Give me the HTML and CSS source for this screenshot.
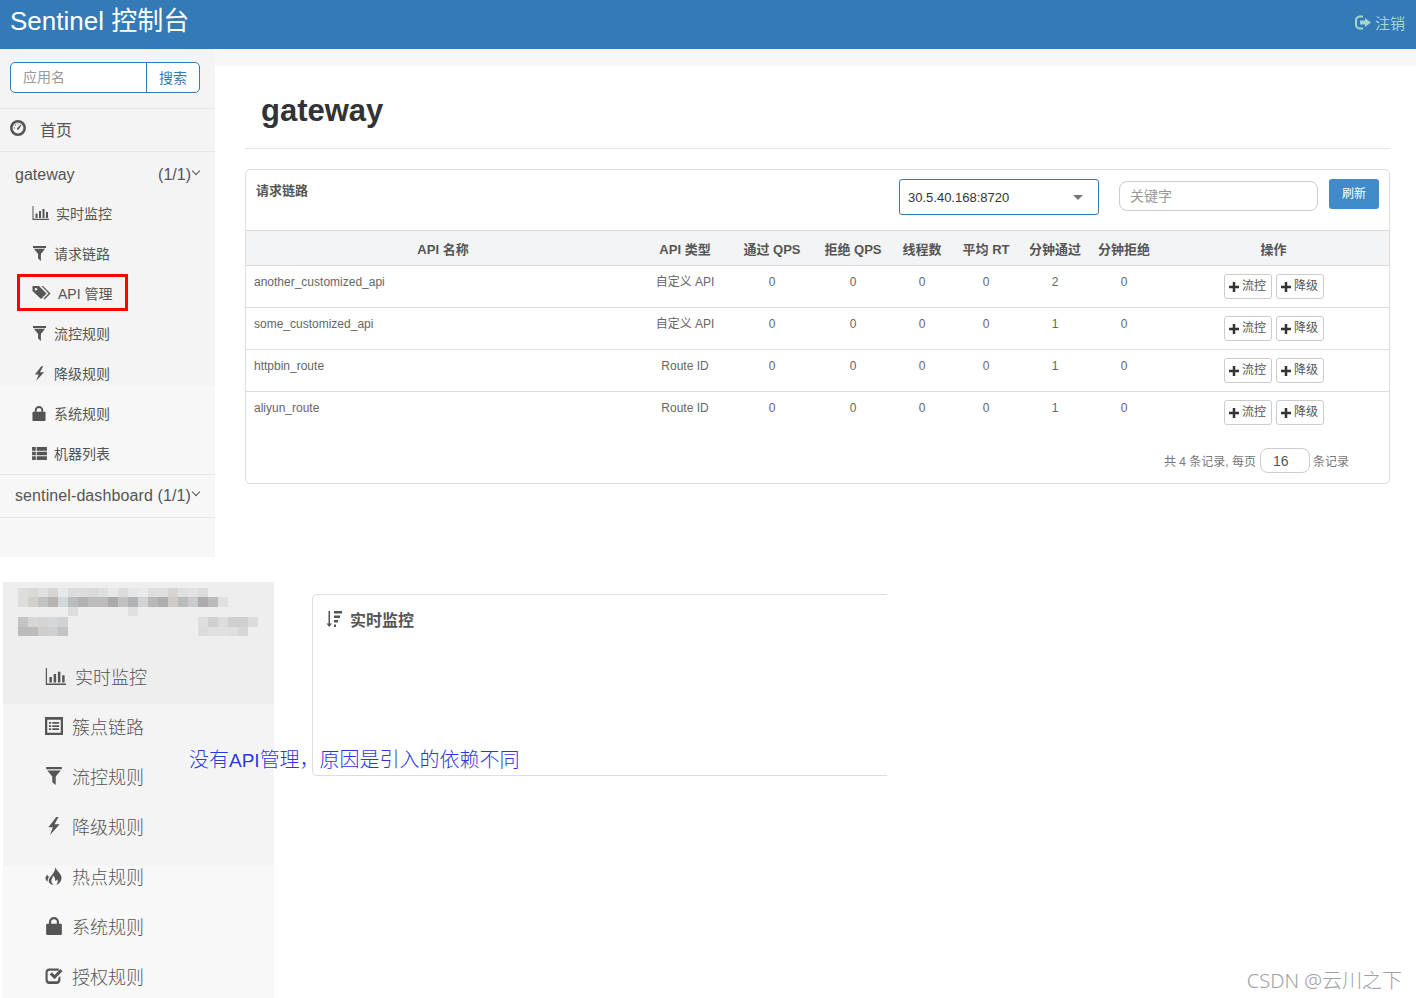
FILE: index.html
```html
<!DOCTYPE html>
<html lang="zh-CN">
<head>
  <meta charset="UTF-8" />
  <title>Sentinel 控制台</title>
  <link rel="stylesheet" href="styles.css">
</head>
<body>
  <svg class="icon-defs" xmlns="http://www.w3.org/2000/svg">
    <symbol id="i-dashboard" viewBox="0 0 16 16"><path fill-rule="evenodd" d="M8 0a8 8 0 110 16A8 8 0 018 0zm0 2.600a5.400 5.400 0 100 10.800A5.400 5.400 0 008 2.600z"/><path d="M7 8.200L10.800 4.500l.7.7L8.600 9.500a1.100 1.100 0 01-1.600-1.300zM3.800 7.500h1.300v1H3.800zM5 4.800h1v1H5zM7.600 3.600h1v1h-1z"/></symbol>
    <symbol id="i-stats" viewBox="0 0 16 14"><path d="M0 0h1v12.800h16V14H0zM3 7.500h2v4.500H3zM6.500 5h2v7h-2zM10 3h2v9h-2zM13.500 6h2v6h-2z"/></symbol>
    <symbol id="i-filter" viewBox="0 0 14 16"><path d="M0 0h14v2H0zM1 3h12L8.500 8.500V16L5.500 13.500v-5z"/></symbol>
    <symbol id="i-tags" viewBox="0 0 18 16"><path fill-rule="evenodd" d="M0 1h6.500L14 8.500 8.500 14 0 6zM3.500 3a1.300 1.300 0 100 2.600 1.300 1.300 0 000-2.600z"/><path d="M9 1h1.500L18 8.500 12 14.500l-1-1 5-5z"/></symbol>
    <symbol id="i-flash" viewBox="0 0 12 16"><path d="M8 0L1 9h4l-2.500 7L11 6.500H6.500L10 0z"/></symbol>
    <symbol id="i-lock" viewBox="0 0 14 16"><path fill-rule="evenodd" d="M2.500 6V4.500a4.500 4.500 0 019 0V6H13a1 1 0 011 1v8a1 1 0 01-1 1H1a1 1 0 01-1-1V7a1 1 0 011-1zm2 0h5V4.500a2.500 2.500 0 00-5 0z"/></symbol>
    <symbol id="i-list" viewBox="0 0 16 14"><path d="M0 0h4v4H0zM5 0h11v4H5zM0 5h4v4H0zM5 5h11v4H5zM0 10h4v4H0zM5 10h11v4H5z"/></symbol>
    <symbol id="i-logout" viewBox="0 0 16 14"><path d="M6 0h2v2H5C3.300 2 2 3.300 2 5v4c0 1.700 1.300 3 3 3h3v2H5C2.200 14 0 11.800 0 9V5c0-2.800 2.200-5 5-5zM10 2.500L16 7l-6 4.500V9H5V5h5z"/></symbol>
    <symbol id="i-plus" viewBox="0 0 12 12"><path d="M4.500 0h3v4.500H12v3H7.500V12h-3V7.500H0v-3h4.500z"/></symbol>
    <symbol id="i-listalt" viewBox="0 0 16 16"><path fill-rule="evenodd" d="M0 0h16v16H0zm2 2.500v11.500h12V2.500zM3.500 4.500h2V6h-2zM6.500 4.500h6V6h-6zM3.500 7.300h2v1.500h-2zM6.500 7.300h6v1.500h-6zM3.500 10.100h2v1.500h-2zM6.500 10.100h6v1.500h-6z"/></symbol>
    <symbol id="i-fire" viewBox="0 0 16 17"><path d="M9 0c1 3 5 5.500 6 9 .6 3.500-1.500 7-5 8 1.500-1.500 2-3.500 1-5.500-.5 1-1 1.500-2 1.500.5-2-.5-4-2-5 .2 2-1.500 3-1.500 5 0 1.500.8 3 2 4C4.500 16.500 3 15 3 13c0-2 1.500-3.500 3-5.500C7.500 5.500 9.500 3.500 9 0zM1.500 7C2 8.500 3 9 3.500 9c-1 1.500-2 3-1.500 5-1.500-1-2-2-2-3.500S1 8.500 1.500 7z"/></symbol>
    <symbol id="i-check" viewBox="0 0 17 16"><path d="M4 1h9v2H4c-.8 0-1.500.7-1.500 1.500v7c0 .8.700 1.500 1.500 1.500h7c.8 0 1.500-.7 1.500-1.500V10l2-2v4c0 2-1.500 3.500-3.500 3.500H4C2 15.500.500 14 .500 12V4.500C.500 2.500 2 1 4 1z"/><path d="M4.500 6.500l2-2 2.500 2.500 5.500-5.500 2 2L9 11z"/></symbol>
    <symbol id="i-sort" viewBox="0 0 16 16"><path d="M2.500 0h1.500v12.500h2L3.200 16 .5 12.500h2zM8 0h8v2.500H8zM8 4.500h6V7H8zM8 9h4v2.500H8zM8 13.500h2V16H8z"/></symbol>
  </svg>

  <header class="topbar">
    <span class="brand">Sentinel 控制台</span>
    <span class="logout"><svg class="ic ic-logout"><use href="#i-logout"/></svg>注销</span>
  </header>

  <div class="console">
    <aside class="side">
      <div class="search">
        <div class="search-input">应用名</div>
        <div class="search-btn">搜索</div>
      </div>
      <div class="home"><svg class="ic ic-dash"><use href="#i-dashboard"/></svg>首页</div>
      <div class="app-row"><span>gateway</span><span class="count">(1/1)<i class="chev"></i></span></div>
      <div class="sub"><svg class="ic ic-stats"><use href="#i-stats"/></svg>实时监控</div>
      <div class="sub"><svg class="ic ic-filter"><use href="#i-filter"/></svg>请求链路</div>
      <div class="sub-marked"><div class="marked"><svg class="ic ic-tags"><use href="#i-tags"/></svg>API 管理</div></div>
      <div class="sub"><svg class="ic ic-filter"><use href="#i-filter"/></svg>流控规则</div>
      <div class="sub"><svg class="ic ic-flash"><use href="#i-flash"/></svg>降级规则</div>
      <div class="sub"><svg class="ic ic-lock"><use href="#i-lock"/></svg>系统规则</div>
      <div class="sub"><svg class="ic ic-list"><use href="#i-list"/></svg>机器列表</div>
      <div class="app-row app-last"><span>sentinel-dashboard</span><span class="count">(1/1)<i class="chev"></i></span></div>
    </aside>

    <main class="content">
      <h1 class="page-title">gateway</h1>
      <section class="panel">
        <div class="panel-head">
          <div class="panel-title">请求链路</div>
          <div class="select">30.5.40.168:8720<i class="caret"></i></div>
          <div class="keyword">关键字</div>
          <div class="refresh">刷新</div>
        </div>
        <table class="grid">
          <colgroup>
            <col class="c-name"><col class="c-type"><col class="c-pass"><col class="c-block">
            <col class="c-thread"><col class="c-rt"><col class="c-min"><col class="c-minb"><col>
          </colgroup>
          <thead>
            <tr><th>API 名称</th><th>API 类型</th><th>通过 QPS</th><th>拒绝 QPS</th><th>线程数</th><th>平均 RT</th><th>分钟通过</th><th>分钟拒绝</th><th>操作</th></tr>
          </thead>
          <tbody>
            <tr>
              <td class="name">another_customized_api</td><td>自定义 API</td><td>0</td><td>0</td><td>0</td><td>0</td><td>2</td><td>0</td>
              <td><div class="ops"><span class="op"><svg class="ic ic-plus"><use href="#i-plus"/></svg>流控</span><span class="op"><svg class="ic ic-plus"><use href="#i-plus"/></svg>降级</span></div></td>
            </tr>
            <tr>
              <td class="name">some_customized_api</td><td>自定义 API</td><td>0</td><td>0</td><td>0</td><td>0</td><td>1</td><td>0</td>
              <td><div class="ops"><span class="op"><svg class="ic ic-plus"><use href="#i-plus"/></svg>流控</span><span class="op"><svg class="ic ic-plus"><use href="#i-plus"/></svg>降级</span></div></td>
            </tr>
            <tr>
              <td class="name">httpbin_route</td><td>Route ID</td><td>0</td><td>0</td><td>0</td><td>0</td><td>1</td><td>0</td>
              <td><div class="ops"><span class="op"><svg class="ic ic-plus"><use href="#i-plus"/></svg>流控</span><span class="op"><svg class="ic ic-plus"><use href="#i-plus"/></svg>降级</span></div></td>
            </tr>
            <tr>
              <td class="name">aliyun_route</td><td>Route ID</td><td>0</td><td>0</td><td>0</td><td>0</td><td>1</td><td>0</td>
              <td><div class="ops"><span class="op"><svg class="ic ic-plus"><use href="#i-plus"/></svg>流控</span><span class="op"><svg class="ic ic-plus"><use href="#i-plus"/></svg>降级</span></div></td>
            </tr>
          </tbody>
        </table>
        <div class="pager">共 4 条记录, 每页<span class="page-size">16</span>条记录</div>
      </section>
    </main>
  </div>

  <div class="lower">
    <aside class="side2">
      <svg class="mosaic" width="271" height="70" xmlns="http://www.w3.org/2000/svg">
        <g>
          <rect x="15" y="6" width="10" height="9" fill="#dedede"/><rect x="25" y="6" width="10" height="9" fill="#d9d9d8"/><rect x="35" y="6" width="10" height="9" fill="#e0e0e0"/><rect x="45" y="6" width="10" height="9" fill="#d8d5d3"/><rect x="55" y="6" width="10" height="9" fill="#e6e9ea"/><rect x="65" y="6" width="20" height="9" fill="#dddddd"/><rect x="85" y="6" width="10" height="9" fill="#d9d9d9"/><rect x="95" y="6" width="10" height="9" fill="#dedfdf"/><rect x="105" y="6" width="10" height="9" fill="#e8e8e8"/><rect x="115" y="6" width="10" height="9" fill="#dddddd"/><rect x="125" y="6" width="10" height="9" fill="#e5e6e7"/><rect x="135" y="6" width="10" height="9" fill="#e9e9e9"/><rect x="145" y="6" width="20" height="9" fill="#dedede"/><rect x="165" y="6" width="10" height="9" fill="#d5d4d3"/><rect x="175" y="6" width="10" height="9" fill="#dfe1e1"/><rect x="185" y="6" width="10" height="9" fill="#e2e2e2"/><rect x="195" y="6" width="10" height="9" fill="#dcdcdc"/>
          <rect x="15" y="15" width="10" height="10" fill="#dddddd"/><rect x="25" y="15" width="10" height="10" fill="#d2cfcc"/><rect x="35" y="15" width="10" height="10" fill="#c0c4c5"/><rect x="45" y="15" width="10" height="10" fill="#b6b5b3"/><rect x="55" y="15" width="10" height="10" fill="#d3d8da"/><rect x="65" y="15" width="10" height="10" fill="#b9bdbf"/><rect x="75" y="15" width="10" height="10" fill="#b2b2b2"/><rect x="85" y="15" width="20" height="10" fill="#bebcba"/><rect x="105" y="15" width="10" height="10" fill="#aaaaab"/><rect x="115" y="15" width="10" height="10" fill="#c2c2c0"/><rect x="125" y="15" width="10" height="10" fill="#b2b3b4"/><rect x="135" y="15" width="10" height="10" fill="#d2d3d5"/><rect x="145" y="15" width="10" height="10" fill="#b8b8b8"/><rect x="155" y="15" width="10" height="10" fill="#aeaeae"/><rect x="165" y="15" width="10" height="10" fill="#cfcbc8"/><rect x="175" y="15" width="10" height="10" fill="#b9bcbc"/><rect x="185" y="15" width="10" height="10" fill="#c8cccc"/><rect x="195" y="15" width="10" height="10" fill="#aeabae"/><rect x="205" y="15" width="10" height="10" fill="#bbbbbb"/><rect x="215" y="15" width="10" height="10" fill="#e0e0e2"/>
          <rect x="65" y="25" width="10" height="9" fill="#dddddd"/><rect x="125" y="25" width="10" height="9" fill="#e0e0e0"/>
          <rect x="15" y="35" width="10" height="10" fill="#c4c4c4"/><rect x="25" y="35" width="10" height="10" fill="#d6d6d6"/><rect x="35" y="35" width="10" height="10" fill="#d6d4d3"/><rect x="45" y="35" width="10" height="10" fill="#d6d7d9"/><rect x="55" y="35" width="10" height="10" fill="#d0d2d3"/>
          <rect x="15" y="45" width="20" height="9" fill="#bcbbba"/><rect x="35" y="45" width="10" height="9" fill="#d0cecc"/><rect x="45" y="45" width="10" height="9" fill="#cdcfd1"/><rect x="55" y="45" width="10" height="9" fill="#c2c3c4"/>
          <rect x="195" y="35" width="10" height="10" fill="#dedede"/><rect x="205" y="35" width="10" height="10" fill="#d0d0d0"/><rect x="215" y="35" width="10" height="10" fill="#dcdcdc"/><rect x="225" y="35" width="20" height="10" fill="#cfcfcf"/><rect x="245" y="35" width="10" height="10" fill="#dcdcde"/>
          <rect x="195" y="45" width="10" height="9" fill="#dcdcdc"/><rect x="205" y="45" width="20" height="9" fill="#e0e0e0"/><rect x="225" y="45" width="10" height="9" fill="#dedede"/><rect x="235" y="45" width="10" height="9" fill="#d6d6d6"/>
        </g>
      </svg>
      <div class="row2 row2-first"><svg class="ic ic2-stats"><use href="#i-stats"/></svg>实时监控</div>
      <div class="row2"><svg class="ic ic2"><use href="#i-listalt"/></svg>簇点链路</div>
      <div class="row2"><svg class="ic ic2"><use href="#i-filter"/></svg>流控规则</div>
      <div class="row2"><svg class="ic ic2"><use href="#i-flash"/></svg>降级规则</div>
      <div class="row2"><svg class="ic ic2"><use href="#i-fire"/></svg>热点规则</div>
      <div class="row2"><svg class="ic ic2"><use href="#i-lock"/></svg>系统规则</div>
      <div class="row2"><svg class="ic ic2"><use href="#i-check"/></svg>授权规则</div>
    </aside>
    <section class="monitor">
      <div class="monitor-title"><svg class="ic ic-sort"><use href="#i-sort"/></svg>实时监控</div>
    </section>
  </div>

  <p class="note">没有<span class="note-api">API</span>管理，原因是引入的依赖不同</p>
  <div class="watermark">CSDN @云川之下</div>
</body>
</html>
```

FILE: styles.css
```css
html, body {
  margin: 0;
  height: 998px;
  overflow: hidden;
  background: #fff;
}

body {
  position: relative;
  font-family: "Liberation Sans", "Noto Sans CJK SC", sans-serif;
  font-size: 14px;
  color: #555;
}

.icon-defs {
  display: none;
}

.ic {
  fill: currentColor;
  flex: none;
}

.topbar {
  height: 49px;
  background: #337ab7;
  display: flex;
  align-items: center;
  justify-content: space-between;
  padding: 0 11px 12px 10px;
  box-sizing: border-box;
}

.brand {
  color: #fff;
  font-size: 26px;
}

.logout {
  display: flex;
  align-items: center;
  gap: 4px;
  color: #a3d5cb;
  font-size: 15px;
  margin-top: 7px;
}

.ic-logout {
  width: 16px;
  height: 15px;
}

.console {
  display: flex;
  height: 508px;
  background: #f7f7f7;
}

.side {
  width: 215px;
  flex: none;
  background: linear-gradient(#f4f4f4 337px, #f7f7f7 337px);
  color: #555;
}

.search {
  display: flex;
  height: 31px;
  margin: 13px 15px 15px 10px;
  border: 1px solid #337ab7;
  border-radius: 5px;
  background: #fff;
  box-sizing: border-box;
  width: 190px;
}

.search-input {
  flex: 1;
  padding-left: 12px;
  line-height: 28px;
  color: #999;
}

.search-btn {
  width: 52px;
  border-left: 1px solid #337ab7;
  color: #337ab7;
  text-align: center;
  line-height: 31px;
}

.home {
  height: 42px;
  border-top: 1px solid #e6e6e6;
  border-bottom: 1px solid #e6e6e6;
  display: flex;
  align-items: center;
  padding: 0 0 2px 10px;
  box-sizing: content-box;
  height: 40px;
  font-size: 16px;
}

.ic-dash {
  width: 16px;
  height: 16px;
  margin: -2px 14px 0 0;
}

.app-row {
  height: 42px;
  display: flex;
  align-items: center;
  justify-content: space-between;
  padding: 4px 15px 0 15px;
  box-sizing: border-box;
  font-size: 16px;
}

.app-last {
  height: 44px;
  padding-top: 0;
  border-top: 1px solid #e6e6e6;
  border-bottom: 1px solid #e6e6e6;
  letter-spacing: 0.1px;
}

.count {
  display: flex;
  align-items: center;
}

.chev {
  width: 5px;
  height: 5px;
  border-right: 1px solid #555;
  border-bottom: 1px solid #555;
  transform: rotate(45deg);
  margin: -8px 1px 0 2px;
}

.sub {
  height: 40px;
  display: flex;
  align-items: center;
  padding: 0 0 2px 32px;
  box-sizing: border-box;
}

.sub-marked {
  height: 40px;
  padding-left: 17px;
  box-sizing: border-box;
}

.marked {
  width: 111px;
  height: 37px;
  box-sizing: border-box;
  border: 3px solid #f00;
  display: flex;
  align-items: center;
  padding-left: 12px;
}

.ic-stats { width: 17px; height: 14px; margin-right: 7px; }
.ic-filter { width: 13px; height: 15px; margin: 0 8px 0 1px; }
.ic-tags { width: 19px; height: 16px; margin-right: 7px; }
.ic-flash { width: 11px; height: 15px; margin: 0 9px 0 2px; }
.ic-lock { width: 14px; height: 15px; margin-right: 8px; }
.ic-list { width: 15px; height: 13px; margin-right: 7px; }

.content {
  flex: 1;
  margin-top: 17px;
  background: #fff;
  padding: 0 26px 0 30px;
}

.page-title {
  margin: 0 0 20px;
  height: 83px;
  padding: 22px 0 0 16px;
  box-sizing: border-box;
  line-height: 45px;
  font-size: 31px;
  font-weight: bold;
  color: #333;
  border-bottom: 1px solid #e5e5e5;
}

.panel {
  border: 1px solid #ddd;
  border-radius: 5px;
  height: 315px;
  box-sizing: border-box;
}

.panel-head {
  height: 60px;
  display: flex;
  align-items: flex-start;
  padding: 9px 10px 0 10px;
  box-sizing: border-box;
}

.panel-title {
  flex: 1;
  font-size: 13px;
  font-weight: bold;
  line-height: 24px;
}

.select {
  width: 200px;
  height: 36px;
  box-sizing: border-box;
  border: 1px solid #337ab7;
  border-radius: 3px;
  display: flex;
  align-items: center;
  justify-content: space-between;
  padding: 0 15px 0 8px;
  font-size: 13px;
  color: #333;
}

.caret {
  width: 0;
  height: 0;
  border-left: 5px solid transparent;
  border-right: 5px solid transparent;
  border-top: 5px solid #777;
}

.keyword {
  width: 199px;
  height: 30px;
  margin: 2px 11px 0 20px;
  box-sizing: border-box;
  border: 1px solid #ccc;
  border-radius: 8px;
  padding-left: 10px;
  line-height: 28px;
  color: #999;
}

.refresh {
  width: 50px;
  height: 30px;
  background: #428bca;
  border-radius: 3px;
  color: #fff;
  text-align: center;
  font-size: 12px;
  line-height: 30px;
}

.grid {
  width: 100%;
  table-layout: fixed;
  border-collapse: collapse;
  font-size: 12px;
  color: #666;
}

.c-name { width: 394px; }
.c-type { width: 90px; }
.c-pass { width: 84px; }
.c-block { width: 78px; }
.c-thread { width: 60px; }
.c-rt { width: 68px; }
.c-min { width: 70px; }
.c-minb { width: 68px; }

.grid th {
  height: 35px;
  padding: 0;
  box-sizing: border-box;
  background: #f3f4f6;
  border-top: 1px solid #ddd;
  border-bottom: 1px solid #ddd;
  font-size: 13px;
  color: #555;
}

.grid td {
  height: 42px;
  padding: 8px 0 0;
  box-sizing: border-box;
  text-align: center;
  vertical-align: top;
  line-height: 17px;
  border-bottom: 1px solid #ddd;
}

.grid tbody tr:last-child td {
  border-bottom: none;
}

.grid td.name {
  text-align: left;
  padding-left: 8px;
}

.ops {
  display: flex;
  justify-content: center;
  gap: 4px;
}

.op {
  width: 48px;
  height: 25px;
  box-sizing: border-box;
  border: 1px solid #ccc;
  border-radius: 3px;
  display: flex;
  align-items: center;
  justify-content: center;
  gap: 3px;
  color: #555;
}

.ic-plus {
  width: 10px;
  height: 10px;
  color: #333;
}

.pager {
  display: flex;
  align-items: center;
  justify-content: flex-end;
  margin-top: 14px;
  padding-right: 40px;
  font-size: 12px;
  color: #777;
}

.page-size {
  width: 50px;
  height: 25px;
  box-sizing: border-box;
  border: 1px solid #ccc;
  border-radius: 8px;
  margin: 0 3px 0 4px;
  padding-left: 12px;
  font-size: 14px;
  line-height: 25px;
  color: #555;
}

.lower {
  display: flex;
  margin-top: 25px;
  padding-left: 3px;
}

.side2 {
  width: 271px;
  height: 416px;
  flex: none;
  background: linear-gradient(#eeeeee 122px, #f4f4f4 122px, #f4f4f4 284px, #f8f8f8 284px);
  color: #666;
}

.mosaic {
  display: block;
}

.row2 {
  height: 50px;
  display: flex;
  align-items: center;
  padding: 0 0 2px 42px;
  box-sizing: border-box;
  font-size: 18px;
  font-weight: 300;
  color: #555;
}

.ic2 {
  width: 18px;
  height: 18px;
  margin-right: 9px;
}

.ic2-stats {
  width: 21px;
  height: 17px;
  margin-right: 9px;
}

.monitor {
  width: 575px;
  height: 182px;
  margin: 12px 0 0 38px;
  box-sizing: border-box;
  border: 1px solid #ddd;
  border-right: none;
  border-radius: 5px 0 0 5px;
}

.monitor-title {
  display: flex;
  align-items: center;
  height: 48px;
  padding-left: 13px;
  font-size: 16px;
  font-weight: bold;
  color: #555;
}

.ic-sort {
  width: 16px;
  height: 16px;
  margin-right: 8px;
}

.note {
  position: absolute;
  left: 189px;
  top: 744px;
  margin: 0;
  font-size: 20px;
  font-weight: 300;
  color: #2a35e8;
  text-shadow: 0 0 3px #fff, 0 0 3px #fff, 0 0 3px #fff;
}

.note-api {
  font-size: 19px;
}

.watermark {
  position: absolute;
  right: 14px;
  bottom: 4px;
  font-family: "Noto Sans", "Noto Sans CJK SC", sans-serif;
  font-size: 20px;
  font-weight: 300;
  color: #a0a0a0;
}
```
